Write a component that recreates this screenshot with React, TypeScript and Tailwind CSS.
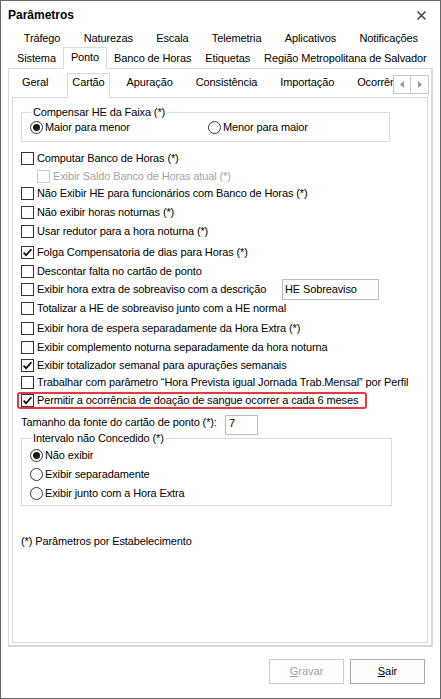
import React from "react";

interface ICheckProps {
	checked?: boolean;
	disabled?: boolean;
}

const Check = (props: ICheckProps) => (
	<span
		className={`w-[13px] h-[13px] shrink-0 border bg-white flex items-center justify-center ${
			props.disabled ? "border-[#cccccc]" : "border-[#333333]"
		}`}
	>
		{props.checked && (
			<svg width="11" height="11" viewBox="0 0 11 11">
				<path d="M1.6 5.6 L4.1 8.2 L9.4 2.3" fill="none" stroke="#000" strokeWidth="1.7" />
			</svg>
		)}
	</span>
);

const Radio = (props: { checked?: boolean }) => (
	<span className="w-[13px] h-[13px] shrink-0 rounded-full border border-[#333333] bg-white flex items-center justify-center">
		{props.checked && <span className="w-[7px] h-[7px] rounded-full bg-[#1a1a1a]" />}
	</span>
);

interface IRowProps {
	label: string;
	checked?: boolean;
	disabled?: boolean;
	className?: string;
}

const CheckRow = (props: IRowProps) => (
	<div className={`flex items-center gap-[3px] h-[16px] ${props.className || ""}`}>
		<Check checked={props.checked} disabled={props.disabled} />
		<span className={`whitespace-nowrap ${props.disabled ? "text-[#a3a3a3]" : ""}`}>{props.label}</span>
	</div>
);

const RadioRow = (props: { label: string; checked?: boolean; className?: string }) => (
	<div className={`flex items-center gap-[2px] h-[16px] pl-[8px] ${props.className || ""}`}>
		<Radio checked={props.checked} />
		<span className="whitespace-nowrap">{props.label}</span>
	</div>
);

const outerRow1 = ["Tráfego", "Naturezas", "Escala", "Telemetria", "Aplicativos", "Notificações"];
const outerRow2 = ["Sistema", "Ponto", "Banco de Horas", "Etiquetas", "Região Metropolitana de Salvador"];

export default function App() {
	return (
		<div className="w-[441px] h-[699px] bg-white border border-[#666666] flex flex-col text-[11px] leading-[13px] tracking-[-0.12px] text-black font-['Liberation_Sans',Arial,sans-serif] overflow-hidden">
			{/* title bar */}
			<div className="h-[29px] shrink-0 flex items-center justify-between pl-[7px] pr-[14px] pb-[1px]">
				<span className="font-bold text-[12px] tracking-normal">Parâmetros</span>
				<svg width="9" height="9" viewBox="0 0 9 9">
					<path d="M0.5 0.5 L8.5 8.5 M8.5 0.5 L0.5 8.5" stroke="#444" strokeWidth="1.5" />
				</svg>
			</div>

			<div className="ml-[7px] w-[425px] flex flex-col">
				{/* outer tabs, first row */}
				<div className="h-[17px] flex pl-[4px] pt-[2px]">
					{outerRow1.map((t) => (
						<span key={t} className="px-[11.7px] shrink-0 whitespace-nowrap">
							{t}
						</span>
					))}
				</div>
				{/* outer tabs, second row */}
				<div className="h-[21px] flex items-start pl-[2px]">
					{outerRow2.map((t) =>
						t === "Ponto" ? (
							<span
								key={t}
								className="relative z-10 h-[22px] px-[7px] pt-[3px] border-x border-t border-[#d9d9d9] bg-white shrink-0 whitespace-nowrap"
							>
								{t}
							</span>
						) : (
							<span key={t} className="mt-[2px] px-[7px] pt-[3px] shrink-0 whitespace-nowrap">
								{t}
							</span>
						)
					)}
				</div>

				{/* outer panel */}
				<div className="h-[579px] border-l border-t border-r-2 border-b-2 border-[#d9d9d9] pl-[3px] pb-[2px] flex flex-col">
					{/* inner tabs */}
					<div className="relative h-[28px] w-[416px] pt-[4px] flex items-start">
						<span className="pl-[10px] pr-[11px] pt-[3px] shrink-0 whitespace-nowrap">Geral</span>
						<span className="relative z-10 ml-[8px] h-[25px] px-[4px] pt-[2px] border-x border-t border-[#d9d9d9] bg-white shrink-0 whitespace-nowrap">
							Cartão
						</span>
						<span className="pl-[17px] pr-[11.5px] pt-[3px] shrink-0 whitespace-nowrap">Apuração</span>
						<span className="px-[11.5px] pt-[3px] shrink-0 whitespace-nowrap">Consistência</span>
						<span className="px-[11.5px] pt-[3px] shrink-0 whitespace-nowrap">Importação</span>
						<span className="px-[11.5px] pt-[3px] shrink-0 whitespace-nowrap">Ocorrências</span>

						{/* scroll buttons */}
						<div className="absolute right-[-1px] top-[6px] z-20 flex h-[19px] bg-white border border-[#c6c6c6]">
							<div className="w-[17px] flex items-center justify-center border-r border-[#c6c6c6]">
								<svg width="4" height="7" viewBox="0 0 4 7">
									<path d="M4 0 L0 3.5 L4 7 Z" fill="#9a9a9a" />
								</svg>
							</div>
							<div className="w-[17px] flex items-center justify-center">
								<svg width="4" height="7" viewBox="0 0 4 7">
									<path d="M0 0 L4 3.5 L0 7 Z" fill="#9a9a9a" />
								</svg>
							</div>
						</div>
					</div>

					{/* inner panel */}
					<div className="w-[416px] h-[546px] border border-[#d9d9d9] pl-[8px] pt-[8px] flex flex-col">
						<fieldset className="w-[369px] border border-[#dcdcdc] pb-[6px]">
							<legend className="ml-[9px] px-[2px] leading-[13px]">Compensar HE da Faixa (*)</legend>
							<div className="flex h-[16px]">
								<div className="w-[178px]">
									<RadioRow label="Maior para menor" checked />
								</div>
								<RadioRow label="Menor para maior" className="pl-0" />
							</div>
						</fieldset>

						<CheckRow className="mt-[8px]" label="Computar Banco de Horas (*)" />
						<CheckRow className="mt-[2px] ml-[16px]" disabled label="Exibir Saldo Banco de Horas atual (*)" />
						<CheckRow className="mt-[1px]" label="Não Exibir HE para funcionários com Banco de Horas (*)" />
						<CheckRow className="mt-[3px]" label="Não exibir horas noturnas (*)" />
						<CheckRow className="mt-[3px]" label="Usar redutor para a hora noturna (*)" />
						<CheckRow className="mt-[5px]" checked label="Folga Compensatoria de dias para Horas (*)" />
						<CheckRow className="mt-[3px]" label="Descontar falta no cartão de ponto" />
						<div className="flex items-center gap-[3px] h-[21px]">
							<Check />
							<span className="w-[242px] whitespace-nowrap">Exibir hora extra de sobreaviso com a descrição</span>
							<div className="w-[97px] h-[21px] border border-[#bcbcbc] pl-[2px] pt-[3px] whitespace-nowrap">
								HE Sobreaviso
							</div>
						</div>
						<CheckRow label="Totalizar a HE de sobreaviso junto com a HE normal" />
						<CheckRow className="mt-[4px]" label="Exibir hora de espera separadamente da Hora Extra (*)" />
						<CheckRow className="mt-[3px]" label="Exibir complemento noturna separadamente da hora noturna" />
						<CheckRow className="mt-[2px]" checked label="Exibir totalizador semanal para apurações semanais" />
						<CheckRow
							className="mt-[1px]"
							label={"Trabalhar com parâmetro \u201CHora Prevista igual Jornada Trab.Mensal\u201D por Perfil"}
						/>
						{/* highlighted option */}
						<div className="mt-[2px] -ml-[4px] w-[350px] h-[17px] border-2 border-[#e23b3f] rounded-[3px] pl-[2px] flex items-center gap-[3px]">
							<Check checked />
							<span className="whitespace-nowrap">Permitir a ocorrência de doação de sangue ocorrer a cada 6 meses</span>
						</div>

						<div className="mt-[6px] flex items-start">
							<span className="w-[204px] pt-[1px] whitespace-nowrap">Tamanho da fonte do cartão de ponto (*):</span>
							<div className="w-[33px] h-[20px] border border-[#bcbcbc] pl-[3px] pt-[1px]">7</div>
						</div>

						<fieldset className="-mt-[3px] w-[371px] border border-[#dcdcdc] pb-[4px]">
							<legend className="ml-[9px] px-[2px] leading-[13px]">Intervalo não Concedido (*)</legend>
							<RadioRow className="mt-[2px]" checked label="Não exibir" />
							<RadioRow className="mt-[3px]" label="Exibir separadamente" />
							<RadioRow className="mt-[3px]" label="Exibir junto com a Hora Extra" />
						</fieldset>

						<div className="mt-[29px] h-[13px] whitespace-nowrap">(*) Parâmetros por Estabelecimento</div>
					</div>
				</div>
			</div>

			{/* buttons */}
			<div className="mt-[12px] flex justify-end gap-[6px] pr-[15px] tracking-normal">
				<button className="w-[75px] h-[25px] border border-[#cfcfcf] bg-white text-[#a0a0a0] flex items-center justify-center">
					<span>
						<span className="underline">G</span>ravar
					</span>
				</button>
				<button className="w-[75px] h-[25px] border border-[#a9a9a9] bg-[#fdfdfd] flex items-center justify-center">
					<span>
						<span className="underline">S</span>air
					</span>
				</button>
			</div>
		</div>
	);
}
